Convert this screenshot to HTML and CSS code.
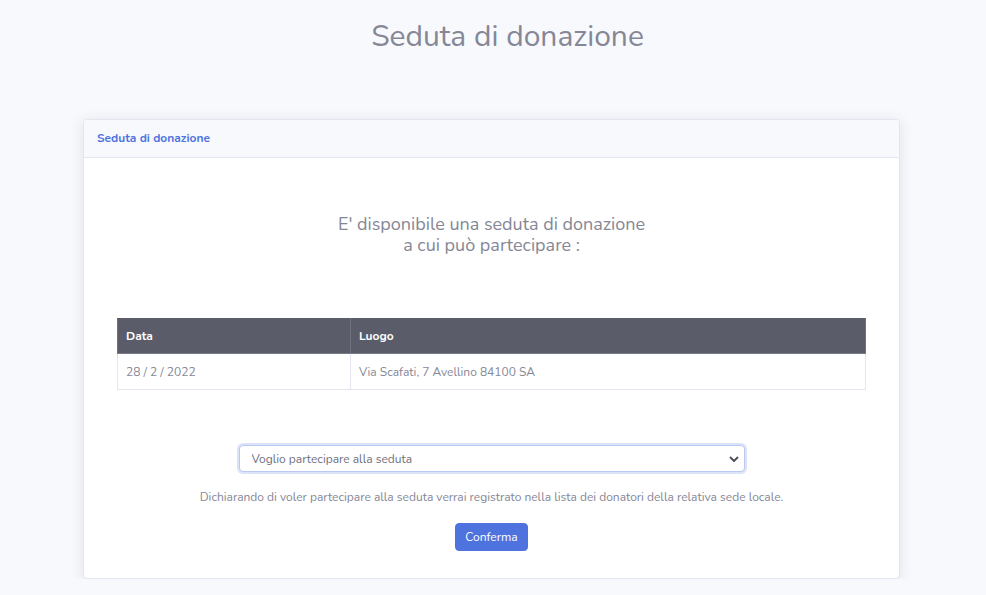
FILE: index.html
```html
<!DOCTYPE html>
<html lang="it">
<head>
<meta charset="utf-8">
<title>Seduta di donazione</title>
<link rel="stylesheet" href="styles.css">
</head>
<body>
<div class="page">
  <h1 class="page-title">Seduta di donazione</h1>
  <div class="card">
    <div class="card-header">Seduta di donazione</div>
    <div class="card-body">
      <p class="lead">E' disponibile una seduta di donazione<br>a cui può partecipare :</p>
      <table class="table">
        <thead>
          <tr><th class="col-date">Data</th><th>Luogo</th></tr>
        </thead>
        <tbody>
          <tr><td class="col-date">28 / 2 / 2022</td><td>Via Scafati, 7 Avellino 84100 SA</td></tr>
        </tbody>
      </table>
      <div class="select-wrap">
        <select class="select">
          <option>Voglio partecipare alla seduta</option>
          <option>Non voglio partecipare alla seduta</option>
        </select>
        <svg class="chevron" width="10" height="8" viewBox="0 0 10 8"><path d="M1.5 2.5 L5 6 L8.5 2.5" fill="none" stroke="#4a4c57" stroke-width="1.8" stroke-linecap="round" stroke-linejoin="round"/></svg>
      </div>
      <p class="note">Dichiarando di voler partecipare alla seduta verrai registrato nella lista dei donatori della relativa sede locale.</p>
      <div class="actions"><button class="btn">Conferma</button></div>
    </div>
  </div>
</div>
</body>
</html>
```
FILE: styles.css
```css
html, body {
  margin: 0;
  padding: 0;
  background: #f8f9fc;
  font-family: "Nunito", "Lato", "Open Sans", sans-serif;
  color: #858796;
}
.page {
  padding: 0 86px 0 83px;
}
.page-title {
  margin: 0;
  padding: 16px 0 0 32px;
  height: 119px;
  box-sizing: border-box;
  font-size: 30px;
  font-weight: 400;
  line-height: 42px;
  text-align: center;
  color: #858796;
}
.card {
  background: #fff;
  border: 1px solid #e3e6f0;
  border-radius: 4px;
  box-shadow: 0 2px 14px rgba(58, 59, 69, 0.12);
  overflow: hidden;
}
.card-header {
  background: #f8f9fc;
  border-bottom: 1px solid #e3e6f0;
  height: 38px;
  box-sizing: border-box;
  padding: 0 13px;
  line-height: 37px;
  font-size: 12px;
  font-weight: 700;
  color: #4e73df;
}
.card-body {
  padding: 56px 33px 27px;
}
.lead {
  margin: 0;
  text-align: center;
  font-size: 18px;
  line-height: 21px;
}
.table {
  margin-top: 62px;
  width: 100%;
  border-collapse: collapse;
  font-size: 12px;
}
.table th, .table td {
  text-align: left;
  padding: 0 8px;
  border: 1px solid #e3e6f0;
}
.table th {
  background: #5a5c69;
  border-color: #6e707e;
  border-top-color: #5a5c69;
  border-bottom: 1px solid #7a7c88;
  color: #fff;
  font-weight: 700;
  height: 34px;
}
.table td {
  height: 35px;
  color: #858796;
}
.col-date {
  width: 216px;
}
.select-wrap {
  position: relative;
  width: 506px;
  margin: 55px auto 0;
}
.select {
  display: block;
  width: 100%;
  height: 27px;
  box-sizing: border-box;
  -webkit-appearance: none;
  appearance: none;
  background: #fff;
  border: 1px solid #bac8f3;
  border-radius: 4px;
  box-shadow: 0 0 0 2px rgba(78, 115, 223, 0.2);
  padding: 0 28px 0 12px;
  font-family: inherit;
  font-size: 12px;
  color: #6e707e;
  outline: none;
}
.chevron {
  position: absolute;
  right: 6px;
  top: 10px;
}
.note {
  margin: 16px 0 0;
  text-align: center;
  font-size: 12px;
  line-height: 18px;
}
.actions {
  margin-top: 17px;
  text-align: center;
}
.btn {
  background: #4e73df;
  border: 1px solid #4e73df;
  border-radius: 4px;
  color: #fff;
  font-family: inherit;
  font-size: 12px;
  height: 28px;
  padding: 0 9px;
  cursor: pointer;
}
```
